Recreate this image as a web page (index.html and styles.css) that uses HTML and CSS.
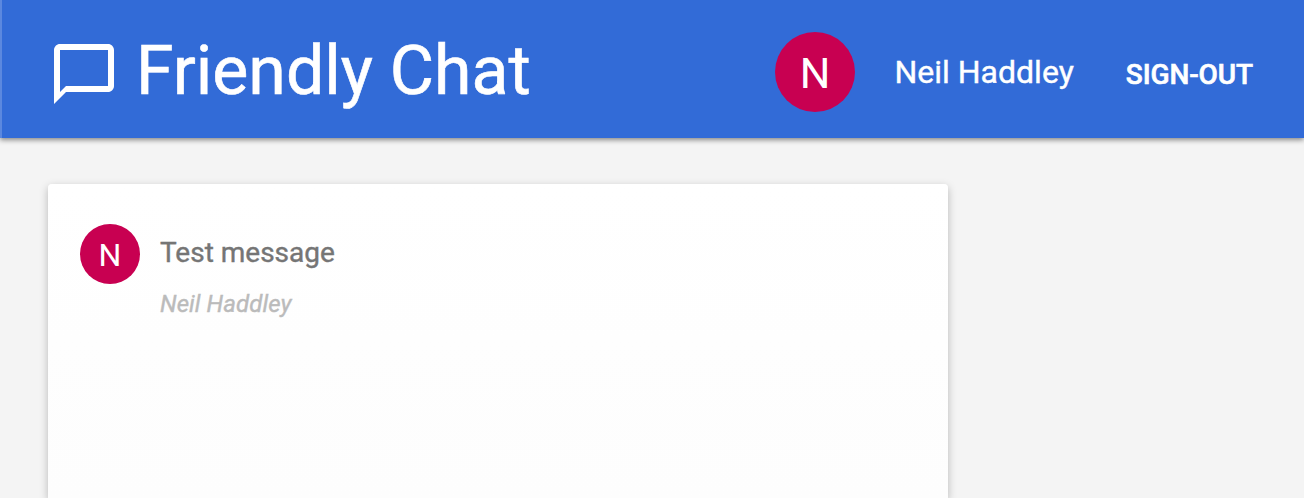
FILE: index.html
```html
<!DOCTYPE html>
<html lang="en">
<head>
<meta charset="utf-8">
<title>Friendly Chat</title>
<link rel="stylesheet" href="styles.css">
</head>
<body>
<header class="header">
  <h1 class="brand">
    <svg class="brand-icon" viewBox="0 0 24 24"><path fill="currentColor" d="M20 2H4c-1.100 0-2 .9-2 2v18l4-4h14c1.100 0 2-.9 2-2V4c0-1.100-.9-2-2-2zm0 14H6l-2 2V4h16v12z"/></svg>
    <span class="brand-name">Friendly Chat</span>
  </h1>
  <div class="user">
    <div class="avatar avatar-large">N</div>
    <div class="user-name">Neil Haddley</div>
    <button class="sign-out">SIGN-OUT</button>
  </div>
</header>
<main class="main">
  <section class="card">
    <div class="message">
      <div class="avatar avatar-small">N</div>
      <div class="message-body">
        <div class="message-text">Test message</div>
        <div class="message-author">Neil Haddley</div>
      </div>
    </div>
  </section>
</main>
</body>
</html>
```
FILE: styles.css
```css
* { box-sizing: border-box; }
body {
  margin: 0;
  height: 498px;
  overflow: hidden;
  display: flex;
  flex-direction: column;
  background: #f4f4f4;
  font-family: Roboto, "Liberation Sans", sans-serif;
}
.header {
  position: relative;
  flex: none;
  display: flex;
  justify-content: space-between;
  height: 138px;
  padding: 0 51px 0 46px;
  border-left: 2px solid #5b88df;
  background: #326bd7;
  color: #fff;
  box-shadow: 0 2px 5px rgba(0,0,0,.45);
}
.brand { display: flex; margin: 0; font-weight: 400; }
.brand-icon { width: 72px; height: 72px; margin-top: 38px; }
.brand-name {
  margin: 31px 0 0 16px;
  font-size: 68px;
  line-height: 80px;
  white-space: nowrap;
  -webkit-text-stroke: .6px currentColor;
}
.user { display: flex; align-items: center; height: 144px; }
.avatar {
  flex: none;
  display: flex;
  align-items: center;
  justify-content: center;
  border-radius: 50%;
  background: #c80051;
  color: #fff;
}
.avatar-large { width: 80px; height: 80px; padding-top: 2px; font-size: 43px; }
.avatar-small { width: 60px; height: 60px; font-size: 32px; padding-top: 1px; }
.user-name {
  margin: 0 0 0 39.500px;
  font-size: 32px;
  white-space: nowrap;
  -webkit-text-stroke: .4px currentColor;
}
.sign-out {
  margin: 5px 0 0 52px;
  padding: 0;
  border: 0;
  background: none;
  color: #fff;
  font: 500 28px Roboto, sans-serif;
  letter-spacing: -.1px;
  -webkit-text-stroke: .6px currentColor;
}
.main { flex: 1; min-height: 0; display: flex; padding: 46px 48px 0; }
.card {
  width: 900px;
  padding: 40px 32px 0;
  border-radius: 4px 4px 0 0;
  background: linear-gradient(#fff, #fdfdfd);
  box-shadow: 0 3px 8px rgba(0,0,0,.25);
}
.message { display: flex; }
.message-body { padding-left: 20px; }
.message-text {
  margin-top: 12px;
  font-size: 28px;
  line-height: 34px;
  color: #757575;
  -webkit-text-stroke: .4px currentColor;
}
.message-author {
  margin-top: 19px;
  font-size: 24px;
  line-height: 30px;
  letter-spacing: .08px;
  font-style: italic;
  color: #bbb;
  -webkit-text-stroke: .4px currentColor;
}
```
